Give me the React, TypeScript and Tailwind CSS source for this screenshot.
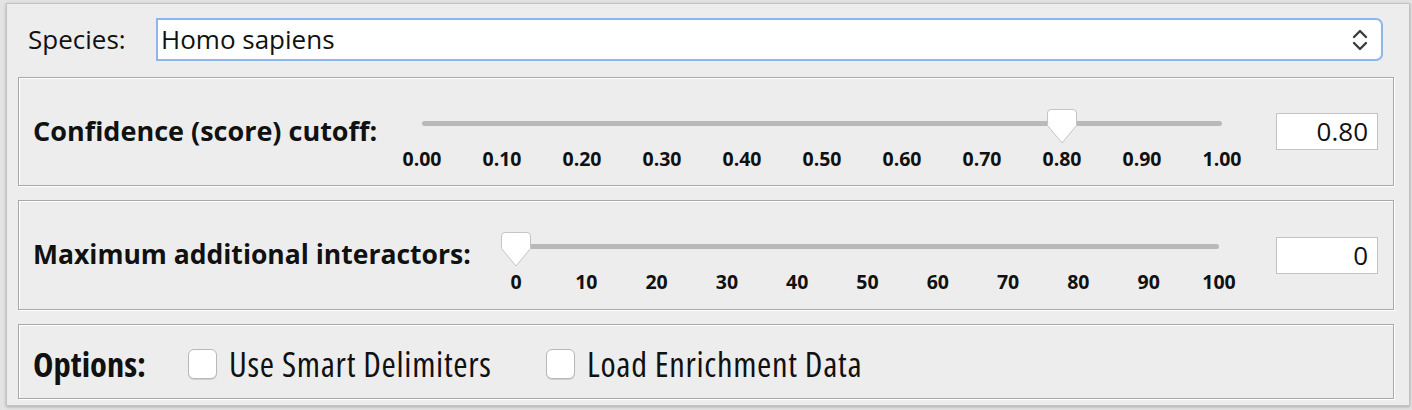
import React from "react";

type SliderProps = {
    width: number;
    labels: string[];
    position: number;
};

const sans = "font-['Open_Sans','DejaVu_Sans',sans-serif]";
const narrow = "font-['Open_Sans',sans-serif] [font-stretch:75%]";

function Thumb() {
    return (
        <svg width="32" height="37" viewBox="0 0 32 37">
            <path
                d="M5 1.5 H27 Q30.5 1.5 30.5 5 V17.5 L16 35 L1.5 17.5 V5 Q1.5 1.5 5 1.5 Z"
                fill="#ffffff"
                stroke="#c4c4c4"
                strokeWidth="1"
            />
        </svg>
    );
}

function Slider({ width, labels, position }: SliderProps) {
    // label cells are 50px wide, track runs between the centres of the first and last cell
    const span = width - 50;
    const thumbLeft = 25 + position * span - 16;
    return (
        <div className="flex flex-col self-start mt-[30px]" style={{ width }}>
            <div className="relative h-[36px]">
                <div className="mx-[25px] mt-[13px] h-[5px] rounded-full bg-[#b9b9b9]" />
                <div className="absolute top-0" style={{ left: thumbLeft }}>
                    <Thumb />
                </div>
            </div>
            <div className={`flex justify-between mt-[4px] ${sans}`}>
                {labels.map((l) => (
                    <span key={l} className="w-[50px] text-center text-[19.5px] leading-[22px] font-bold text-[#111]">
                        {l}
                    </span>
                ))}
            </div>
        </div>
    );
}

function NumberBox({ value }: { value: string }) {
    return (
        <div
            className={`ml-auto mr-[15px] w-[102px] h-[37px] bg-white border border-[#c3c3c3] flex items-center justify-end pr-[9px] text-[26px] text-[#111] ${sans}`}
        >
            {value}
        </div>
    );
}

function Checkbox({ label }: { label: string }) {
    return (
        <div className="flex items-center">
            <div className="w-[29px] h-[30px] rounded-[6px] bg-white border border-[#b8b8b8] shadow-[0_1px_0_#d0d0d0]" />
            <span className={`ml-[12px] text-[34.5px] leading-[36px] tracking-[0.7px] text-[#111] ${narrow}`}>{label}</span>
        </div>
    );
}

const panel = "ml-[11px] w-[1376px] border border-[#a9a9a9] bg-[#ededed] shadow-[inset_1px_1px_0_#ffffff,1px_1px_0_#ffffff] flex items-center pl-[14px]";

export default function App() {
    const confidence = ["0.00", "0.10", "0.20", "0.30", "0.40", "0.50", "0.60", "0.70", "0.80", "0.90", "1.00"];
    const interactors = ["0", "10", "20", "30", "40", "50", "60", "70", "80", "90", "100"];

    return (
        <div className="w-[1412px] h-[410px] bg-[#e3e3e3] pt-[3px] pl-[6px] overflow-hidden">
            <div className="w-[1404px] h-[403px] bg-[#ededed] border border-[#c2c2c2] shadow-[0_1px_3px_rgba(0,0,0,0.25)]">
                {/* species */}
                <div className="flex items-center mt-[14px] ml-[21px]">
                    <span className={`w-[128px] text-[26px] text-[#111] ${sans}`}>Species:</span>
                    <div className="w-[1227px] h-[43px] bg-white border-2 border-[#8cb6ec] rounded-r-[7px] flex items-center pl-[3px] pr-[13px]">
                        <span className={`text-[26px] text-[#111] ${sans}`}>Homo sapiens</span>
                        <svg className="ml-auto" width="16" height="24" viewBox="0 0 16 24">
                            <path d="M2 9 L8 3 L14 9" fill="none" stroke="#3c3c3c" strokeWidth="2.4" strokeLinecap="round" strokeLinejoin="round" />
                            <path d="M2 15 L8 21 L14 15" fill="none" stroke="#3c3c3c" strokeWidth="2.4" strokeLinecap="round" strokeLinejoin="round" />
                        </svg>
                    </div>
                </div>

                {/* confidence */}
                <div className={`${panel} mt-[16px] h-[109px]`}>
                    <span className={`w-[364px] text-[27px] font-bold text-[#111] ${sans}`}>Confidence (score) cutoff:</span>
                    <Slider width={850} labels={confidence} position={0.8} />
                    <NumberBox value="0.80" />
                </div>

                {/* interactors */}
                <div className={`${panel} mt-[14px] h-[110px]`}>
                    <span className={`w-[458px] text-[26.5px] font-bold text-[#111] ${sans}`}>Maximum additional interactors:</span>
                    <Slider width={753} labels={interactors} position={0} />
                    <NumberBox value="0" />
                </div>

                {/* options */}
                <div className={`${panel} mt-[14px] h-[75px] pt-[4px]`}>
                    <span className={`w-[155px] text-[34.5px] font-bold text-[#111] ${narrow}`}>Options:</span>
                    <div className="w-[358px]">
                        <Checkbox label="Use Smart Delimiters" />
                    </div>
                    <Checkbox label="Load Enrichment Data" />
                </div>
            </div>
        </div>
    );
}
